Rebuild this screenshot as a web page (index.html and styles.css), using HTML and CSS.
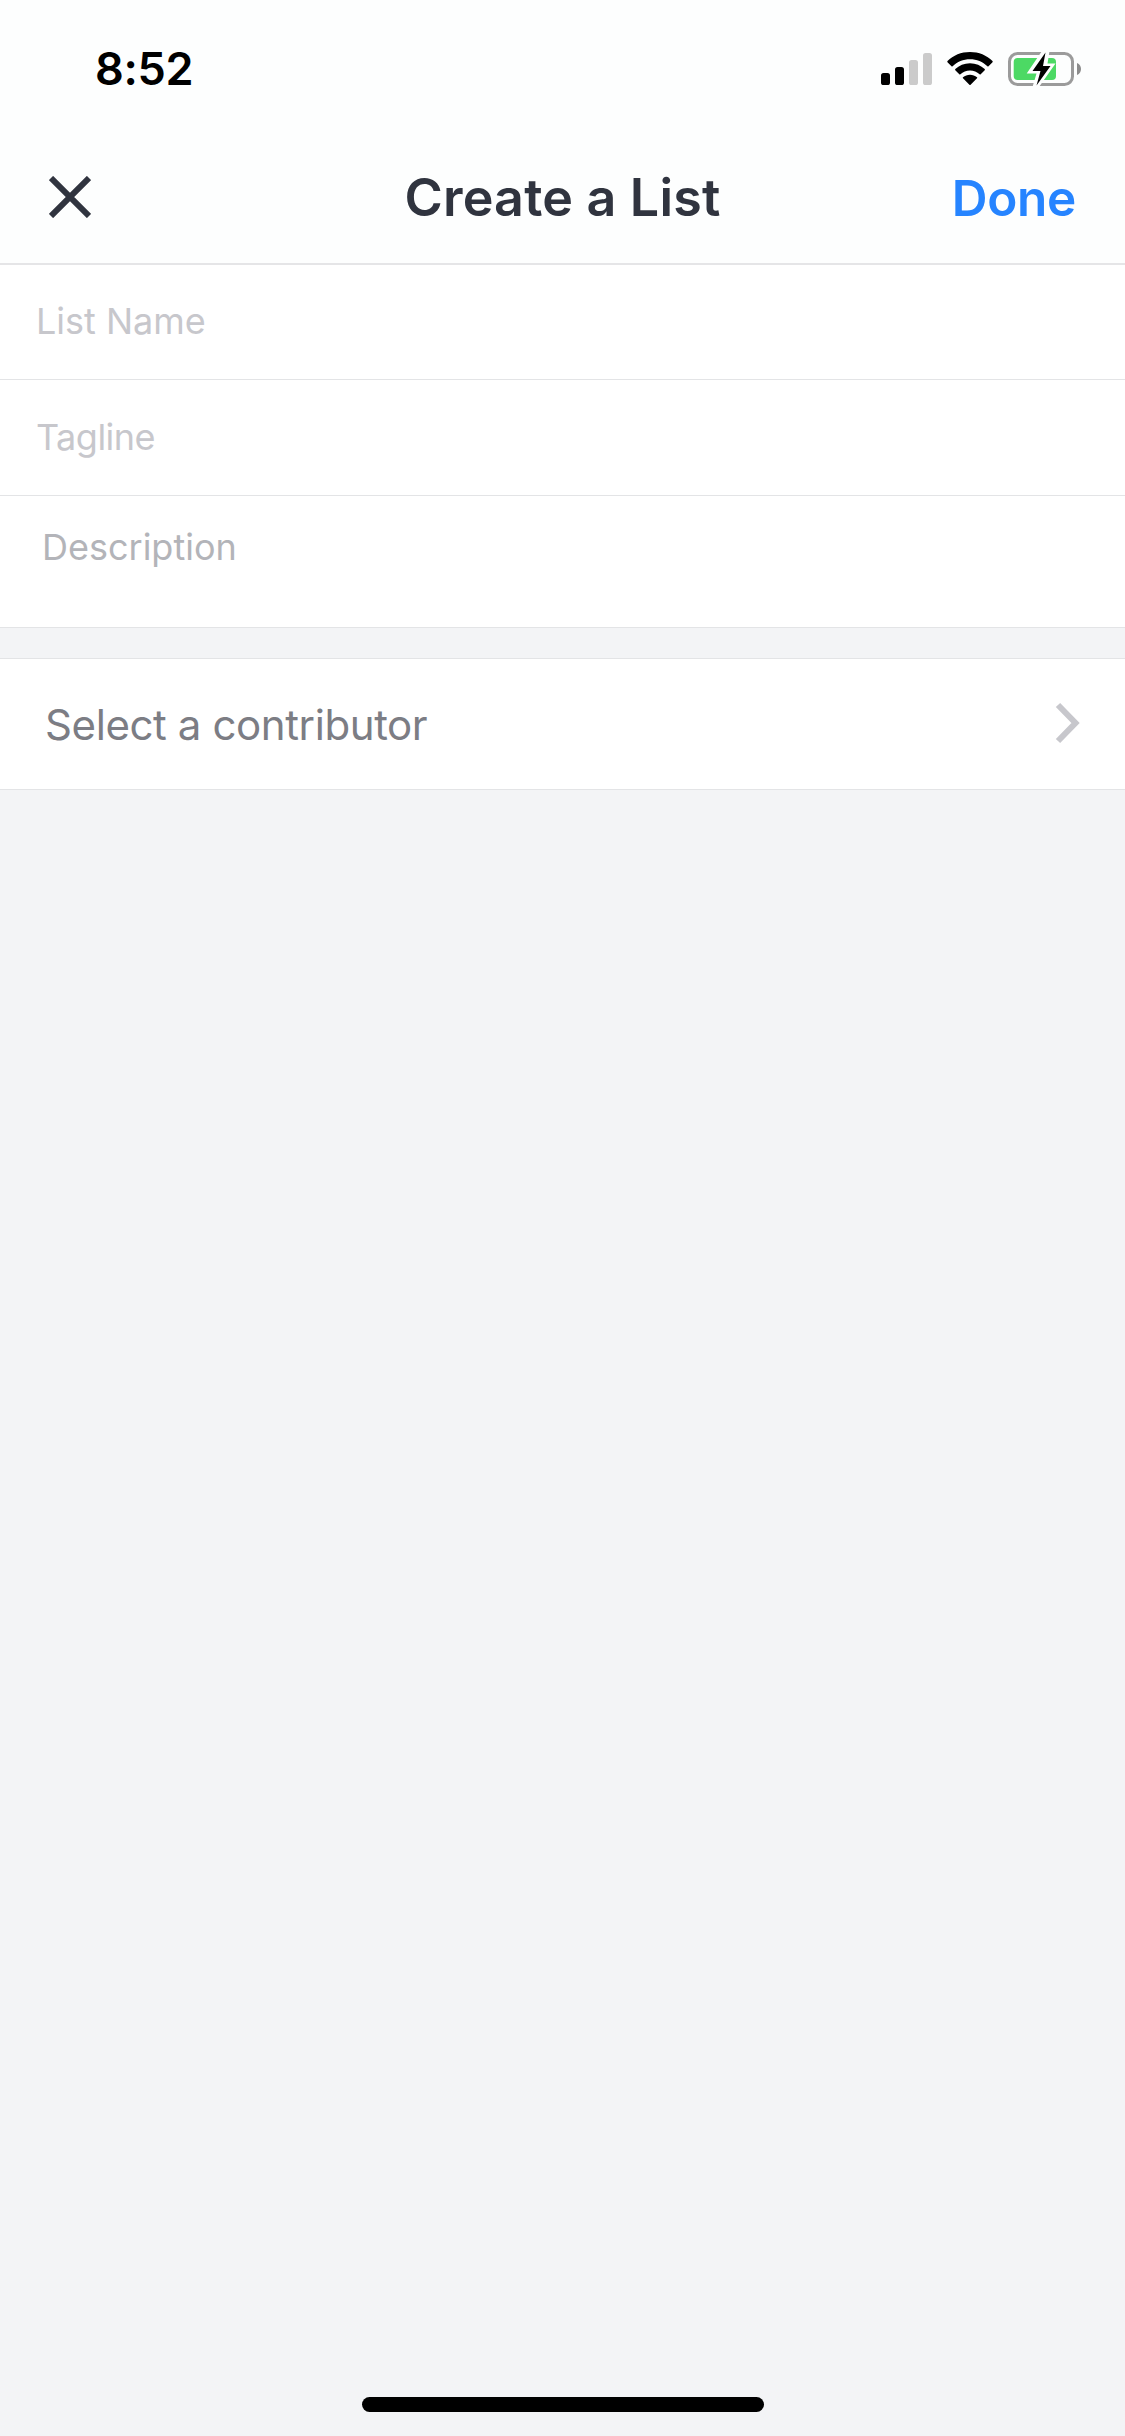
FILE: index.html
```html
<!DOCTYPE html>
<html lang="en">
<head>
    <meta charset="UTF-8">
    <meta name="viewport" content="width=device-width, initial-scale=1.0">
    <title>Create a List</title>
    <link rel="stylesheet" href="styles.css">
</head>
<body>
    <!-- Status bar -->
    <div class="status-bar">
        <span class="time">8:52</span>
        <div class="status-icons">
            <svg class="signal" width="51" height="34" viewBox="0 0 51 34">
                <rect x="0" y="21" width="9" height="12" rx="2.6"/>
                <rect x="14" y="15" width="9" height="18" rx="2.6"/>
                <rect class="off" x="28" y="8" width="9" height="25" rx="2.6"/>
                <rect class="off" x="42" y="1" width="9" height="32" rx="2.6"/>
            </svg>
            <svg class="wifi" width="46" height="34" viewBox="0 0 46 34">
                <path d="M23 0C31.800 0 39.800 3.300 45.500 9.100Q46 9.700 45.500 10.200L41.500 14.200Q41 14.700 40.400 14.200C35.800 9.800 29.700 7.200 23 7.200S10.200 9.800 5.600 14.200Q5 14.700 4.500 14.200L.5 10.200Q0 9.700.5 9.100C6.200 3.300 14.200 0 23 0Z"/>
                <path d="M23 11.300C28.800 11.300 33.900 13.500 37.700 17.100Q38.200 17.700 37.700 18.200L33.700 22.200Q33.200 22.700 32.600 22.200C30 19.900 26.700 18.500 23 18.500S16 19.900 13.400 22.200Q12.800 22.700 12.300 22.200L8.300 18.200Q7.800 17.700 8.300 17.100C12.100 13.500 17.200 11.300 23 11.300Z"/>
                <path d="M23 22.800C25.600 22.800 28.100 23.700 30 25.200Q30.600 25.700 30 26.300L23.600 32.800Q23 33.300 22.400 32.800L16 26.300Q15.400 25.700 16 25.200C17.900 23.700 20.400 22.800 23 22.800Z"/>
            </svg>
            <svg class="battery" width="74" height="36" viewBox="0 0 74 36">
                <rect class="shell" x="1.500" y="2.500" width="63" height="31" rx="8"/>
                <path class="tip" d="M69 12C71.800 13.200 73 15.400 73 18S71.800 22.800 69 24Z"/>
                <rect class="level" x="5.700" y="7" width="42.300" height="22" rx="4"/>
                <path class="bolt-edge" d="M34 0L18.700 22.500H28.500L24.500 36H31L47.500 12.500H39.500L41.500 0Z"/>
                <path class="bolt" d="M37.500 1.500L24.500 20H32.500L28.500 34.500L42.500 15H35Z"/>
            </svg>
        </div>
    </div>

    <!-- Navigation -->
    <header class="nav">
        <button class="close" aria-label="Close">
            <svg width="42" height="42" viewBox="0 0 42 42">
                <path d="M2 2L40 40M40 2L2 40"/>
            </svg>
        </button>
        <h1>Create a List</h1>
        <button class="done">Done</button>
    </header>

    <!-- List details -->
    <form class="details">
        <div class="field"><span class="list-name">List Name</span></div>
        <div class="field tagline-field"><span class="tagline">Tagline</span></div>
        <div class="field description-field"><span class="description">Description</span></div>
    </form>

    <div class="contributor">
        <span>Select a contributor</span>
        <svg width="26" height="42" viewBox="0 0 26 42">
            <path d="M3 3L20.500 21L3 39"/>
        </svg>
    </div>

    <div class="home-bar"></div>
</body>
</html>
```
FILE: styles.css
```css
* {
    box-sizing: border-box;
}

body {
    font-family: Inter, 'Liberation Sans', sans-serif;
    background-color: #f3f4f6;
    margin: 0;
    min-height: 2436px;
    display: flex;
    flex-direction: column;
    white-space: nowrap;
}

svg {
    display: block;
}

/* Status bar */
.status-bar {
    height: 132px;
    padding: 42px 43px 0 95px;
    display: flex;
    justify-content: space-between;
    align-items: flex-start;
    background-color: #fdfefe;
}

.time {
    font-size: 45px;
    font-weight: 600;
    line-height: 54px;
    letter-spacing: -0.3px;
    color: #000;
}

.status-icons {
    display: flex;
    align-items: center;
    padding-top: 9px;
}

.wifi {
    margin: 0 15px;
}

.off {
    fill: #cbcbcb;
}

.shell {
    fill: none;
    stroke: #9b9b9b;
    stroke-width: 3;
}

.tip {
    fill: #8c8c8c;
}

.level {
    fill: #4cd964;
}

.bolt-edge {
    fill: #fdfefe;
}

/* Navigation */
.nav {
    height: 133px;
    padding: 0 49px 1px;
    display: grid;
    grid-template-columns: 1fr auto 1fr;
    align-items: center;
    background-color: #fdfefe;
    border-bottom: 2px solid #e5e5e7;
}

.nav button {
    font-family: inherit;
    background: none;
    border: none;
    padding: 0;
}

.close path {
    fill: none;
    stroke: #30343f;
    stroke-width: 6;
}

h1 {
    margin: 0;
    font-size: 52px;
    font-weight: 600;
    letter-spacing: 0.2px;
    color: #30343f;
}

.nav .done {
    justify-self: end;
    padding-top: 2px;
    font-size: 49.5px;
    font-weight: 600;
    letter-spacing: -0.3px;
    color: #2684ff;
}

/* List details */
.details {
    background-color: #fff;
}

.field {
    height: 115px;
    padding: 0 36px 2px;
    display: flex;
    align-items: center;
    font-size: 36px;
    color: #c7c7cc;
    border-bottom: 1px solid #e3e4e6;
}

.tagline-field {
    height: 116px;
    letter-spacing: -0.5px;
}

.description-field {
    height: 132px;
    padding: 29px 42px 0;
    align-items: flex-start;
    line-height: 44px;
    color: #b3b4b9;
}

/* Contributor row */
.contributor {
    height: 132px;
    margin-top: 30px;
    padding: 0 44px 0 45px;
    display: flex;
    justify-content: space-between;
    align-items: center;
    font-size: 42px;
    letter-spacing: -0.4px;
    color: #7c7d84;
    background-color: #fff;
    border-top: 1px solid #e3e4e6;
    border-bottom: 1px solid #e3e4e6;
}

.contributor svg {
    margin-bottom: 3px;
}

.contributor path {
    fill: none;
    stroke: #c7c7cc;
    stroke-width: 6;
}

/* Home indicator */
.home-bar {
    width: 402px;
    height: 15px;
    margin: auto auto 24px;
    border-radius: 8px;
    background-color: #000;
}
```
